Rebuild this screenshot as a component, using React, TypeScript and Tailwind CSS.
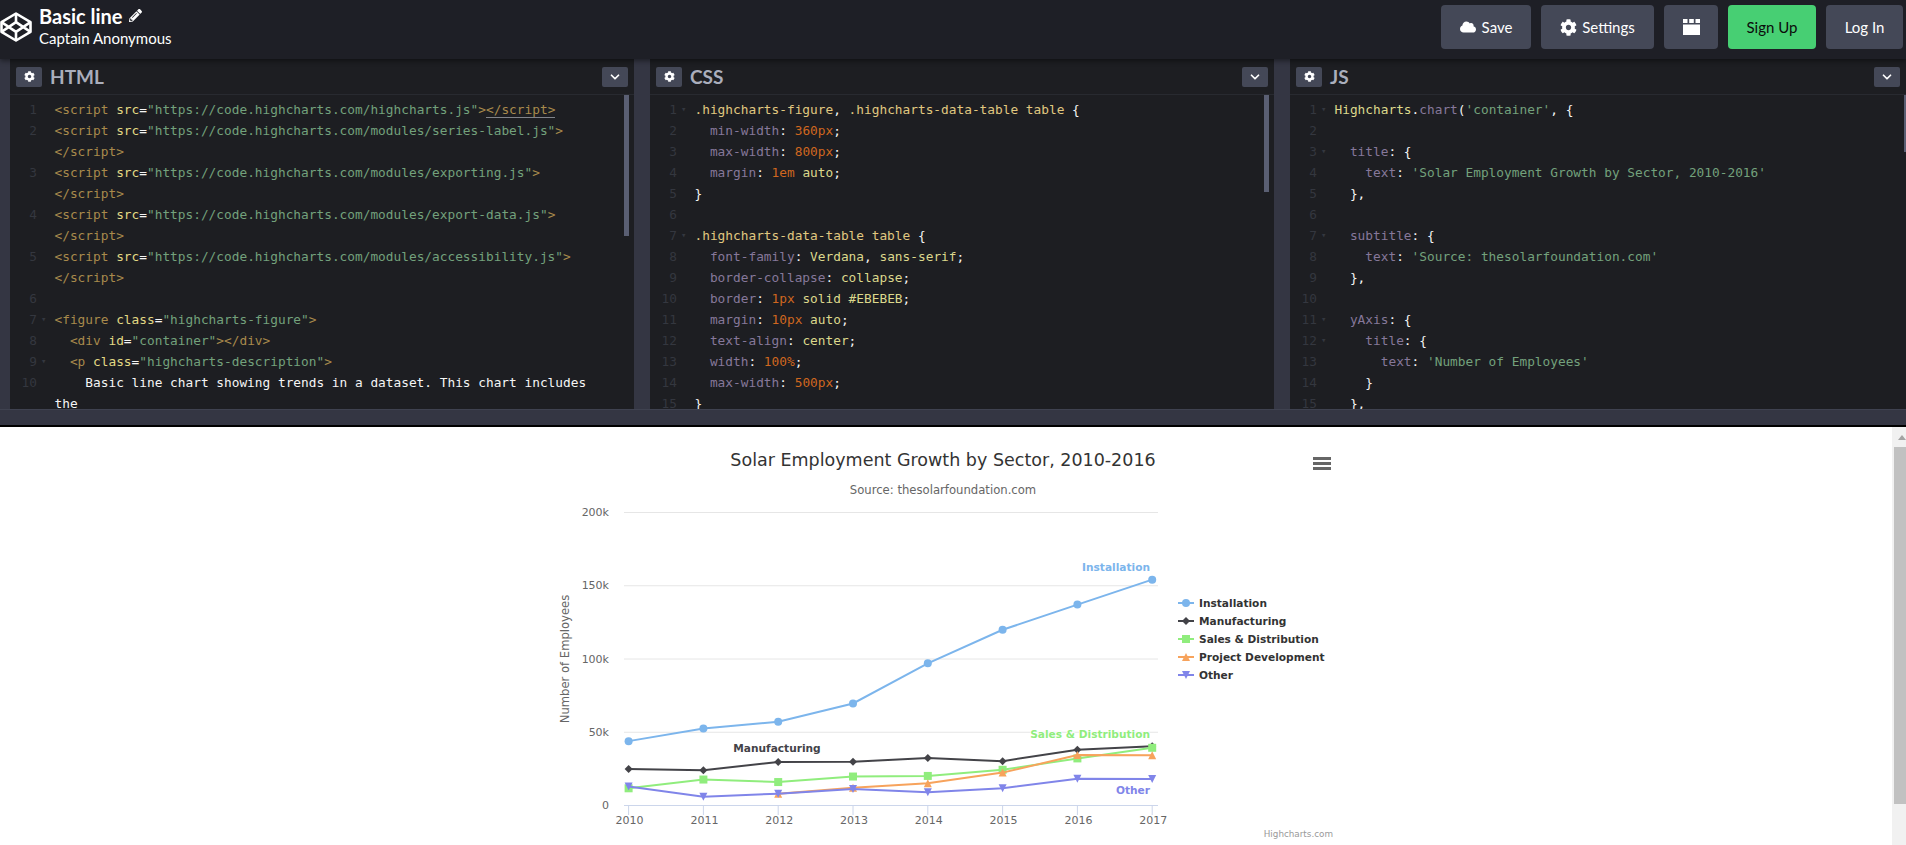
import { ChevronDown } from "lucide-react"
import { FaCloud, FaCog, FaPencilAlt } from "react-icons/fa"

type Token = [string, string, boolean?]
type Row = { n?: number; fold?: boolean; tokens: Token[] }

const tag = "text-[#a88a4c]"
const attr = "text-[#e2d984]"
const str = "text-[#73a17c]"
const white = "text-[#f5f5f5]"
const sel = "text-[#e0c880]"
const prop = "text-[#86789a]"
const num = "text-[#d0671f]"
const kw = "text-[#dcd88c]"

const scriptRow = (n: number, src: string): Row[] => [
  {
    n,
    tokens: [
      ["<script ", tag],
      ["src", attr],
      ["=", white],
      [`"${src}"`, str],
      [">", tag],
    ],
  },
  { tokens: [["</script>", tag]] },
]

const htmlRows: Row[] = [
  {
    n: 1,
    tokens: [
      ["<script ", tag],
      ["src", attr],
      ["=", white],
      ['"https://code.highcharts.com/highcharts.js"', str],
      [">", tag],
      ["</script>", tag, true],
    ],
  },
  ...scriptRow(2, "https://code.highcharts.com/modules/series-label.js"),
  ...scriptRow(3, "https://code.highcharts.com/modules/exporting.js"),
  ...scriptRow(4, "https://code.highcharts.com/modules/export-data.js"),
  ...scriptRow(5, "https://code.highcharts.com/modules/accessibility.js"),
  { n: 6, tokens: [] },
  {
    n: 7,
    fold: true,
    tokens: [
      ["<figure ", tag],
      ["class", attr],
      ["=", white],
      ['"highcharts-figure"', str],
      [">", tag],
    ],
  },
  {
    n: 8,
    tokens: [
      ["  <div ", tag],
      ["id", attr],
      ["=", white],
      ['"container"', str],
      ["></div>", tag],
    ],
  },
  {
    n: 9,
    fold: true,
    tokens: [
      ["  <p ", tag],
      ["class", attr],
      ["=", white],
      ['"highcharts-description"', str],
      [">", tag],
    ],
  },
  { n: 10, tokens: [["    Basic line chart showing trends in a dataset. This chart includes", white]] },
  { tokens: [["the", white]] },
]

const cssDecl = (n: number, name: string, value: Token[]): Row => ({
  n,
  tokens: [[`  ${name}`, prop], [": ", white], ...value, [";", white]],
})

const cssRows: Row[] = [
  {
    n: 1,
    fold: true,
    tokens: [
      [".highcharts-figure", sel],
      [", ", white],
      [".highcharts-data-table table", sel],
      [" {", white],
    ],
  },
  cssDecl(2, "min-width", [["360px", num]]),
  cssDecl(3, "max-width", [["800px", num]]),
  cssDecl(4, "margin", [["1em", num], [" auto", kw]]),
  { n: 5, tokens: [["}", white]] },
  { n: 6, tokens: [] },
  {
    n: 7,
    fold: true,
    tokens: [
      [".highcharts-data-table table", sel],
      [" {", white],
    ],
  },
  cssDecl(8, "font-family", [["Verdana", kw], [", ", white], ["sans-serif", kw]]),
  cssDecl(9, "border-collapse", [["collapse", kw]]),
  cssDecl(10, "border", [["1px", num], [" solid #EBEBEB", kw]]),
  cssDecl(11, "margin", [["10px", num], [" auto", kw]]),
  cssDecl(12, "text-align", [["center", kw]]),
  cssDecl(13, "width", [["100%", num]]),
  cssDecl(14, "max-width", [["500px", num]]),
  { n: 15, tokens: [["}", white]] },
]

const jsRows: Row[] = [
  {
    n: 1,
    fold: true,
    tokens: [
      ["Highcharts", kw],
      [".", white],
      ["chart", prop],
      ["(", white],
      ["'container'", str],
      [", {", white],
    ],
  },
  { n: 2, tokens: [] },
  { n: 3, fold: true, tokens: [["  title", prop], [": {", white]] },
  { n: 4, tokens: [["    text", prop], [": ", white], ["'Solar Employment Growth by Sector, 2010-2016'", str]] },
  { n: 5, tokens: [["  },", white]] },
  { n: 6, tokens: [] },
  { n: 7, fold: true, tokens: [["  subtitle", prop], [": {", white]] },
  { n: 8, tokens: [["    text", prop], [": ", white], ["'Source: thesolarfoundation.com'", str]] },
  { n: 9, tokens: [["  },", white]] },
  { n: 10, tokens: [] },
  { n: 11, fold: true, tokens: [["  yAxis", prop], [": {", white]] },
  { n: 12, fold: true, tokens: [["    title", prop], [": {", white]] },
  { n: 13, tokens: [["      text", prop], [": ", white], ["'Number of Employees'", str]] },
  { n: 14, tokens: [["    }", white]] },
  { n: 15, tokens: [["  },", white]] },
]

function CodeLine({ row }: { row: Row }) {
  return (
    <div className="flex h-[21px] items-center leading-[21px]">
      <span className="w-[27px] shrink-0 text-right text-[#34373f]">{row.n}</span>
      <span className="w-[17.5px] shrink-0 pl-[4px] text-[9px] text-[#34373f]">{row.fold ? "▾" : ""}</span>
      <span className="whitespace-pre">
        {row.tokens.map(([text, color, matched], i) => (
          <span key={i} className={`${color} ${matched ? "border-b border-[#80838a]" : ""}`}>
            {text}
          </span>
        ))}
      </span>
    </div>
  )
}

function EditorPanel({
  title,
  rows,
  thumb,
  className,
}: {
  title: string
  rows: Row[]
  thumb: string
  className: string
}) {
  return (
    <section className={`relative flex shrink-0 flex-col overflow-hidden bg-[#1d1e22] ${className}`}>
      <header className="flex h-[36px] shrink-0 items-center justify-between border-b border-[#282a30] pl-[6px] pr-[6px]">
        <div className="flex items-center gap-[8px]">
          <span className="flex h-[20px] w-[26px] items-center justify-center rounded-[2px] bg-[#444857] text-white">
            <FaCog className="size-[11px]" />
          </span>
          <h2 className="font-['Lato',sans-serif] text-[19px] font-bold leading-none text-[#aaaebc]">{title}</h2>
        </div>
        <span className="flex h-[20px] w-[26px] items-center justify-center rounded-[2px] bg-[#444857] text-white">
          <ChevronDown className="size-[14px]" strokeWidth={3} />
        </span>
      </header>
      <div className="pt-[4px] font-['DejaVu_Sans_Mono',monospace] text-[12.8px]">
        {rows.map((row, i) => (
          <CodeLine key={i} row={row} />
        ))}
      </div>
      <div className={`absolute top-[36px] w-[5px] bg-[#5a5f73] ${thumb}`} />
    </section>
  )
}

function Logo() {
  return (
    <svg viewBox="0 0 32 30" className="mt-[12px] h-[30px] w-[32px] shrink-0" fill="none" stroke="white" strokeWidth="2.6" strokeLinejoin="round">
      <path d="M16 1.5 30.5 10.2v9.6L16 28.5 1.5 19.8v-9.6z" />
      <path d="M16 1.5v8.7M16 19.8v8.7M1.5 10.2 16 19.8l14.5-9.6M1.5 19.8 16 10.2l14.5 9.6" />
    </svg>
  )
}

function TopBar() {
  const btn = "flex h-[44px] items-center justify-center rounded-[4px] bg-[#444857] text-[15px] text-white"
  return (
    <header className="relative z-10 flex h-[59px] items-start justify-between bg-[#1e1f26] shadow-[0_2px_5px_rgba(0,0,0,0.45)] font-['Lato',sans-serif]">
      <div className="flex items-start gap-[7px]">
        <Logo />
        <div className="pt-[3px] text-white">
          <div className="flex h-[25px] items-center gap-[6px] text-[20px] font-bold leading-none">
            Basic line
            <FaPencilAlt className="size-[13px]" />
          </div>
          <div className="text-[15px] leading-[21px]">Captain Anonymous</div>
        </div>
      </div>
      <div className="flex gap-[10px] pr-[3px] pt-[5px]">
        <button className={`${btn} w-[90px] gap-[6px]`}>
          <FaCloud className="size-[16px]" />
          Save
        </button>
        <button className={`${btn} w-[113px] gap-[5px]`}>
          <FaCog className="size-[17px]" />
          Settings
        </button>
        <button className={`${btn} w-[54px]`}>
          <svg viewBox="0 0 17 16" className="h-[16px] w-[17px]" fill="white">
            <path d="M0 0h4.5v4H0zM6.2 0h4.6v4H6.2zM12.5 0H17v4h-4.5zM0 5.5h17V16H0z" />
          </svg>
        </button>
        <button className={`${btn} w-[88px] !bg-[#47cf73] !text-[#0b0b0b]`}>Sign Up</button>
        <button className={`${btn} w-[77px]`}>Log In</button>
      </div>
    </header>
  )
}

// Chart geometry, in svg coordinates (the svg sits at page x=546, y=443)
const x = (i: number) => 82.6 + 74.8 * i
const y = (v: number) => 362.5 - v * (293 / 200000)

type Series = { name: string; color: string; data: (number | null)[]; marker: "circle" | "diamond" | "square" | "triangle" | "triangle-down" }

const series: Series[] = [
  { name: "Installation", color: "#7cb5ec", marker: "circle", data: [43934, 52503, 57177, 69658, 97031, 119931, 137133, 154175] },
  { name: "Manufacturing", color: "#434348", marker: "diamond", data: [24916, 24064, 29742, 29851, 32490, 30282, 38121, 40434] },
  { name: "Sales & Distribution", color: "#90ed7d", marker: "square", data: [11744, 17722, 16005, 19771, 20185, 24377, 32147, 39387] },
  { name: "Project Development", color: "#f7a35c", marker: "triangle", data: [null, null, 7988, 12169, 15112, 22452, 34400, 34227] },
  { name: "Other", color: "#8085e9", marker: "triangle-down", data: [12908, 5948, 8105, 11248, 8989, 11816, 18274, 18111] },
]

function Marker({ kind, cx, cy, color }: { kind: Series["marker"]; cx: number; cy: number; color: string }) {
  if (kind === "circle") return <circle cx={cx} cy={cy} r={4} fill={color} />
  if (kind === "square") return <rect x={cx - 4} y={cy - 4} width={8} height={8} fill={color} />
  const pts =
    kind === "diamond"
      ? `${cx},${cy - 4} ${cx + 4},${cy} ${cx},${cy + 4} ${cx - 4},${cy}`
      : kind === "triangle"
        ? `${cx},${cy - 4} ${cx + 4},${cy + 4} ${cx - 4},${cy + 4}`
        : `${cx - 4},${cy - 4} ${cx + 4},${cy - 4} ${cx},${cy + 4}`
  return <polygon points={pts} fill={color} />
}

function Chart() {
  const labels = [
    { text: "Installation", x: 604, y: 124, anchor: "end", color: "#7cb5ec" },
    { text: "Manufacturing", x: 231, y: 305, anchor: "middle", color: "#434348" },
    { text: "Sales & Distribution", x: 604, y: 291, anchor: "end", color: "#90ed7d" },
    { text: "Other", x: 604, y: 347, anchor: "end", color: "#8085e9" },
  ]
  return (
    <svg viewBox="0 0 800 400" className="mx-auto mt-[16px] block h-[400px] w-[800px] font-['DejaVu_Sans',sans-serif]">
      <text x={397} y={17} dominantBaseline="central" textAnchor="middle" fontSize={17.5} fill="#333333">
        Solar Employment Growth by Sector, 2010-2016
      </text>
      <text x={397} y={47} dominantBaseline="central" textAnchor="middle" fontSize={11.65} fill="#666666">
        Source: thesolarfoundation.com
      </text>
      {[0, 50000, 100000, 150000, 200000].map((v) => (
        <g key={v}>
          {v > 0 && <line x1={78} x2={612} y1={y(v)} y2={y(v)} stroke="#e6e6e6" />}
          <text x={63} y={y(v)} dominantBaseline="central" textAnchor="end" fontSize={11} fill="#666666">
            {v === 0 ? "0" : `${v / 1000}k`}
          </text>
        </g>
      ))}
      <line x1={78} x2={612} y1={362.5} y2={362.5} stroke="#ccd6eb" />
      {series[0].data.map((_, i) => (
        <g key={i}>
          <line x1={x(i)} x2={x(i)} y1={362} y2={372} stroke="#ccd6eb" />
          <text x={x(i) + 1} y={377} dominantBaseline="central" textAnchor="middle" fontSize={11} fill="#666666">
            {2010 + i}
          </text>
        </g>
      ))}
      <text
        transform="translate(19 216) rotate(-90)"
        dominantBaseline="central"
        textAnchor="middle"
        fontSize={11.6}
        fill="#666666"
      >
        Number of Employees
      </text>
      {series.map((s) => {
        const points = s.data.map((v, i) => (v === null ? null : `${x(i)},${y(v)}`)).filter(Boolean)
        return (
          <g key={s.name}>
            <polyline points={points.join(" ")} fill="none" stroke={s.color} strokeWidth={2} />
            {s.data.map((v, i) => (v === null ? null : <Marker key={i} kind={s.marker} cx={x(i)} cy={y(v)} color={s.color} />))}
          </g>
        )
      })}
      {labels.map((l) => (
        <text
          key={l.text}
          x={l.x}
          y={l.y}
          dominantBaseline="central"
          textAnchor={l.anchor as "end" | "middle"}
          fontSize={10.6}
          fontWeight="bold"
          fill={l.color}
          stroke="white"
          strokeWidth={1.5}
          paintOrder="stroke"
        >
          {l.text}
        </text>
      ))}
      {series.map((s, i) => (
        <g key={s.name}>
          <line x1={632} x2={648} y1={160 + i * 18} y2={160 + i * 18} stroke={s.color} strokeWidth={2} />
          <Marker kind={s.marker} cx={640} cy={160 + i * 18} color={s.color} />
          <text x={653} y={160 + i * 18} dominantBaseline="central" fontSize={10.6} fontWeight="bold" fill="#333333">
            {s.name}
          </text>
        </g>
      ))}
      <path d="M767 15.5h18M767 20.5h18M767 25.5h18" stroke="#666666" strokeWidth={3} />
      <text x={787} y={391} dominantBaseline="central" textAnchor="end" fontSize={8.8} fill="#999999">
        Highcharts.com
      </text>
    </svg>
  )
}

export default function App() {
  return (
    <div className="flex h-[845px] flex-col overflow-hidden bg-white">
      <TopBar />
      <main className="flex h-[350px] shrink-0 gap-[16px] bg-[#343643] pl-[10px]">
        <EditorPanel title="HTML" rows={htmlRows} thumb="right-[5px] h-[141px]" className="w-[624px]" />
        <EditorPanel title="CSS" rows={cssRows} thumb="right-[5px] h-[97px]" className="w-[624px]" />
        <EditorPanel title="JS" rows={jsRows} thumb="right-0 h-[57px] !w-[2px]" className="w-[616px]" />
      </main>
      <div className="h-[16px] shrink-0 border-t border-[#3f4250] bg-[#343643]" />
      <div className="h-[2px] shrink-0 bg-black" />
      <div className="flex min-h-0 flex-1">
        <div className="min-w-0 flex-1">
          <Chart />
        </div>
        <aside className="flex w-[14px] shrink-0 flex-col items-end bg-[#f1f1f1]">
          <div className="mt-[8px] h-0 w-0 border-x-[4px] border-b-[5px] border-x-transparent border-b-[#a3a3a3]" />
          <div className="mt-[7px] h-[357px] w-[12px] bg-[#c1c1c1]" />
        </aside>
      </div>
    </div>
  )
}
